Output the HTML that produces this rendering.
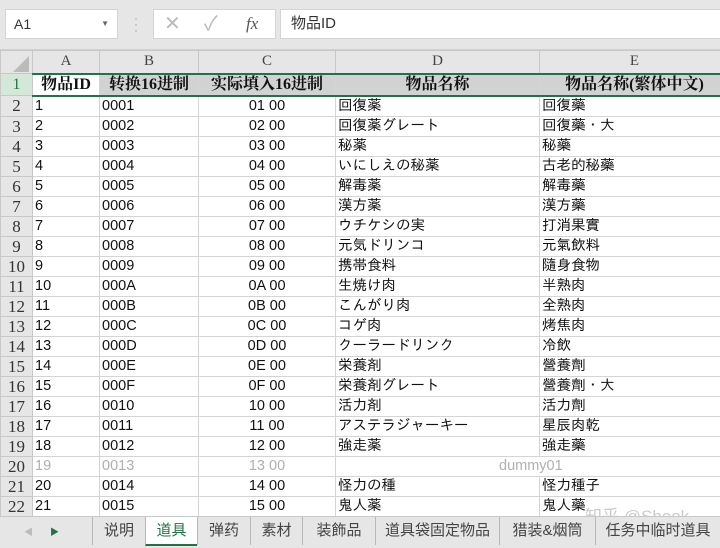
<!DOCTYPE html>
<html><head><meta charset="utf-8"><style>
*{margin:0;padding:0;box-sizing:border-box}
body{width:720px;height:548px;overflow:hidden;background:#fff;position:relative;font-family:"Liberation Sans","Noto Sans CJK JP",sans-serif}
.top{position:absolute;left:0;top:0;width:720px;height:50px;background:#e6e6e6;border-bottom:1px solid #d0d0d0}
.box{position:absolute;background:#fff;border:1px solid #d4d4d4;top:9px;height:30px}
table{position:absolute;left:0;top:50px;width:729px;border-collapse:collapse;table-layout:fixed}
td{border:1px solid #d4d4d4;height:20px;font-size:14.5px;line-height:19px;white-space:nowrap;overflow:hidden;padding:0 2px;color:#111;font-family:"Liberation Sans","IPAGothic","Noto Sans CJK JP",sans-serif}
td.rh{background:#e6e6e6;text-align:center;font-family:"Liberation Serif","Noto Serif CJK SC",serif;font-size:17px;color:#333;padding:0;border-color:#c8c8c8}
tr.ch td{background:#e6e6e6;text-align:center;font-family:"Liberation Serif",serif;font-size:15px;color:#444;height:23px;border-color:#c8c8c8}
tr.r1 td{background:#d2d2d2;font-family:"Liberation Serif","Noto Serif CJK SC",serif;font-weight:bold;font-size:16px;height:22px;text-align:center;border-top:2px solid #217346;border-bottom:2px solid #217346}
tr.r1 td.rh{background:#d3e8d9;color:#217346;font-weight:normal;border-top:1px solid #c8c8c8;border-bottom:1px solid #c8c8c8}
tr.r1 td.a1{background:#fff}
.c{text-align:center}
.g{color:#b0b0b0}
.tabs{position:absolute;left:0;top:516px;width:720px;height:32px;background:#e6e6e6;border-top:1px solid #c8c8c8;font-family:"Liberation Sans","Noto Sans CJK SC",sans-serif;font-size:15px;color:#444}
.tab{position:absolute;top:0;height:28px;line-height:28px;text-align:center;border-left:1px solid #b8b8b8}
</style></head><body>
<div class="top">
 <div class="box" style="left:5px;width:113px;font-size:14px;line-height:28px;padding-left:8px;color:#333">A1<span style="position:absolute;right:8px;font-size:8px;color:#666">▼</span></div>
 <div style="position:absolute;left:134px;top:15px;color:#999;font-size:12px;line-height:6px">·<br>·<br>·</div>
 <div class="box" style="left:153px;width:123px;color:#bbb;font-size:20px;line-height:28px">
  <span style="position:absolute;left:10px">✕</span><span style="position:absolute;left:50px">✓</span><span style="position:absolute;left:92px;color:#555;font-family:'Liberation Serif',serif;font-style:italic;font-size:17px">fx</span></div>
 <div class="box" style="left:280px;width:445px;font-size:15px;line-height:28px;padding-left:10px;color:#333;font-family:'Liberation Sans','Noto Sans CJK JP',sans-serif">物品ID</div>
</div>
<table>
<colgroup><col style="width:32px"><col style="width:67px"><col style="width:99px"><col style="width:137px"><col style="width:204px"><col style="width:190px"></colgroup>
<tr class="ch"><td class="rh" style="font-size:14px;background:#e6e6e6"><div style="width:0;height:0;border-left:16px solid transparent;border-bottom:16px solid #bbb;margin:4px 0 0 12px"></div></td><td>A</td><td>B</td><td>C</td><td>D</td><td>E</td></tr>
<tr class="r1"><td class="rh">1</td><td class="a1">物品ID</td><td>转换16进制</td><td>实际填入16进制</td><td>物品名称</td><td>物品名称(繁体中文)</td></tr>
<tr><td class="rh">2</td><td>1</td><td>0001</td><td class="c">01 00</td><td>回復薬</td><td>回復藥</td></tr>
<tr><td class="rh">3</td><td>2</td><td>0002</td><td class="c">02 00</td><td>回復薬グレート</td><td>回復藥・大</td></tr>
<tr><td class="rh">4</td><td>3</td><td>0003</td><td class="c">03 00</td><td>秘薬</td><td>秘藥</td></tr>
<tr><td class="rh">5</td><td>4</td><td>0004</td><td class="c">04 00</td><td>いにしえの秘薬</td><td>古老的秘藥</td></tr>
<tr><td class="rh">6</td><td>5</td><td>0005</td><td class="c">05 00</td><td>解毒薬</td><td>解毒藥</td></tr>
<tr><td class="rh">7</td><td>6</td><td>0006</td><td class="c">06 00</td><td>漢方薬</td><td>漢方藥</td></tr>
<tr><td class="rh">8</td><td>7</td><td>0007</td><td class="c">07 00</td><td>ウチケシの実</td><td>打消果實</td></tr>
<tr><td class="rh">9</td><td>8</td><td>0008</td><td class="c">08 00</td><td>元気ドリンコ</td><td>元氣飲料</td></tr>
<tr><td class="rh">10</td><td>9</td><td>0009</td><td class="c">09 00</td><td>携帯食料</td><td>隨身食物</td></tr>
<tr><td class="rh">11</td><td>10</td><td>000A</td><td class="c">0A 00</td><td>生焼け肉</td><td>半熟肉</td></tr>
<tr><td class="rh">12</td><td>11</td><td>000B</td><td class="c">0B 00</td><td>こんがり肉</td><td>全熟肉</td></tr>
<tr><td class="rh">13</td><td>12</td><td>000C</td><td class="c">0C 00</td><td>コゲ肉</td><td>烤焦肉</td></tr>
<tr><td class="rh">14</td><td>13</td><td>000D</td><td class="c">0D 00</td><td>クーラードリンク</td><td>冷飲</td></tr>
<tr><td class="rh">15</td><td>14</td><td>000E</td><td class="c">0E 00</td><td>栄養剤</td><td>營養劑</td></tr>
<tr><td class="rh">16</td><td>15</td><td>000F</td><td class="c">0F 00</td><td>栄養剤グレート</td><td>營養劑・大</td></tr>
<tr><td class="rh">17</td><td>16</td><td>0010</td><td class="c">10 00</td><td>活力剤</td><td>活力劑</td></tr>
<tr><td class="rh">18</td><td>17</td><td>0011</td><td class="c">11 00</td><td>アステラジャーキー</td><td>星辰肉乾</td></tr>
<tr><td class="rh">19</td><td>18</td><td>0012</td><td class="c">12 00</td><td>強走薬</td><td>強走藥</td></tr>
<tr class="g"><td class="rh">20</td><td class="g">19</td><td class="g">0013</td><td class="c g">13 00</td><td colspan="2" class="g" style="padding-left:163px">dummy01</td></tr>
<tr><td class="rh">21</td><td>20</td><td>0014</td><td class="c">14 00</td><td>怪力の種</td><td>怪力種子</td></tr>
<tr><td class="rh">22</td><td>21</td><td>0015</td><td class="c">15 00</td><td>鬼人薬</td><td>鬼人藥</td></tr>
<tr><td class="rh">23</td><td>22</td><td>0016</td><td class="c">16 00</td><td>鬼人薬グレート</td><td>鬼人藥・大</td></tr>
</table>
<div style="position:absolute;left:585px;top:502px;font-size:17px;color:rgba(180,180,180,.7);font-family:'Liberation Sans','Noto Sans CJK SC',sans-serif">知乎 @Shook</div>
<div class="tabs">
 <span style="position:absolute;left:24px;top:8px;font-size:9px;color:#bbb">◀</span>
 <span style="position:absolute;left:50px;top:8px;font-size:9px;color:#217346">▶</span>
 <div class="tab" style="left:92px;width:53px">说明</div>
 <div class="tab" style="left:145px;width:52px;background:#fff;color:#217346;border-bottom:2px solid #217346;height:29px">道具</div>
 <div class="tab" style="left:197px;width:53px">弹药</div>
 <div class="tab" style="left:250px;width:52px">素材</div>
 <div class="tab" style="left:302px;width:73px">装飾品</div>
 <div class="tab" style="left:375px;width:124px">道具袋固定物品</div>
 <div class="tab" style="left:499px;width:96px">猎装&amp;烟筒</div>
 <div class="tab" style="left:595px;width:125px">任务中临时道具</div>
</div>
</body></html>
